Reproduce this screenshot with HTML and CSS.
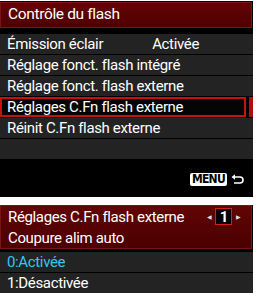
FILE: index.html
```html
<!DOCTYPE html>
<html>
<head>
<meta charset="utf-8">
<link rel="stylesheet" href="styles.css">
</head>
<body>
<div class="panel top">
  <div class="header"><span class="title">Contrôle du flash</span></div>
  <div class="list">
    <div class="row"><span class="label">Émission éclair</span><span class="value">Activée</span></div>
    <div class="row"><span class="label">Réglage fonct. flash intégré</span></div>
    <div class="row"><span class="label">Réglage fonct. flash externe</span></div>
    <div class="row selected"><span class="label">Réglages C.Fn flash externe</span><span class="tab"></span></div>
    <div class="row"><span class="label">Réinit C.Fn flash externe</span></div>
    <div class="row empty"></div>
  </div>
  <div class="footer">
    <span class="menu-key">MENU</span>
    <svg class="back" width="13" height="11" viewBox="0 0 13 11"><path d="M3 3 H9 A3 3 0 0 1 9 9 H3" fill="none" stroke="#fff" stroke-width="1.6"/><path d="M0.5 3 L4 0.2 V5.8 Z" fill="#fff"/></svg>
  </div>
</div>
<div class="panel bottom">
  <div class="header two">
    <div class="hline"><span>Réglages C.Fn flash externe</span>
      <span class="pager"><span class="arr">&#9664;</span><span class="num">1</span><span class="arr">&#9654;</span></span>
    </div>
    <div class="hline"><span>Coupure alim auto</span></div>
  </div>
  <div class="list opts">
    <div class="row"><span class="label cyan">0:Activée</span></div>
    <div class="row"><span class="label">1:Désactivée</span></div>
  </div>
</div>
</body>
</html>
```
FILE: styles.css
```css
html, body { margin: 0; padding: 0; background: #fff; }
body { width: 256px; height: 293px; overflow: hidden; font-family: Roboto, "Liberation Sans", sans-serif; font-size: 15px; letter-spacing: -0.35px; color: #fff; }
.panel { background: #000; width: 253px; }
.top { margin-top: 1px; height: 196px; display: flex; flex-direction: column; }
.header { background: linear-gradient(180deg, #650404 0%, #4e0000 100%); border: 1px solid #7a1414; margin: 1px 1px 0 0; box-sizing: border-box; height: 26px; display: flex; align-items: center; padding-left: 7px; }
.title { line-height: 1; font-size: 15.5px; }
.list { margin-top: 6px; display: flex; flex-direction: column; gap: 1px; }
.row { background: #232323; height: 20px; display: flex; align-items: center; padding-left: 7px; box-sizing: border-box; position: relative; }
.row.selected { background: #050505; border: 2px solid #c8100e; padding-left: 5px; margin-right: 7px; }
.tab { position: absolute; right: -9px; top: -2px; width: 4px; height: 20px; background: #b00d0b; }
.row .value { margin-left: auto; margin-right: 54px; }
.footer { flex: 1; display: flex; align-items: flex-end; justify-content: flex-end; padding: 0 9px 11px 0; gap: 4px; }
.menu-key { background: #fff; color: #000; font-family: "DejaVu Sans Condensed", "DejaVu Sans", sans-serif; font-weight: bold; font-size: 12px; line-height: 13px; padding: 0 2px; border-radius: 2px; letter-spacing: -0.7px; }
.back { display: block; margin-bottom: 1px; }
.bottom { margin-top: 8px; }
.header.two { height: 44px; flex-direction: column; align-items: stretch; justify-content: center; padding: 0 10px 0 7px; gap: 4px; background: linear-gradient(180deg, #620404 0%, #4a0000 100%); }
.hline { display: flex; align-items: center; height: 17px; }
.pager { margin-left: auto; display: flex; align-items: center; gap: 4px; }
.arr { font-size: 6px; color: #ddd; }
.num { border: 1px solid #d0201c; width: 17px; height: 17px; display: flex; align-items: center; justify-content: center; background: #000; font-weight: bold; box-sizing: border-box; }
.opts { margin-top: 3px; }
.cyan { color: #36c6f0; }
```
